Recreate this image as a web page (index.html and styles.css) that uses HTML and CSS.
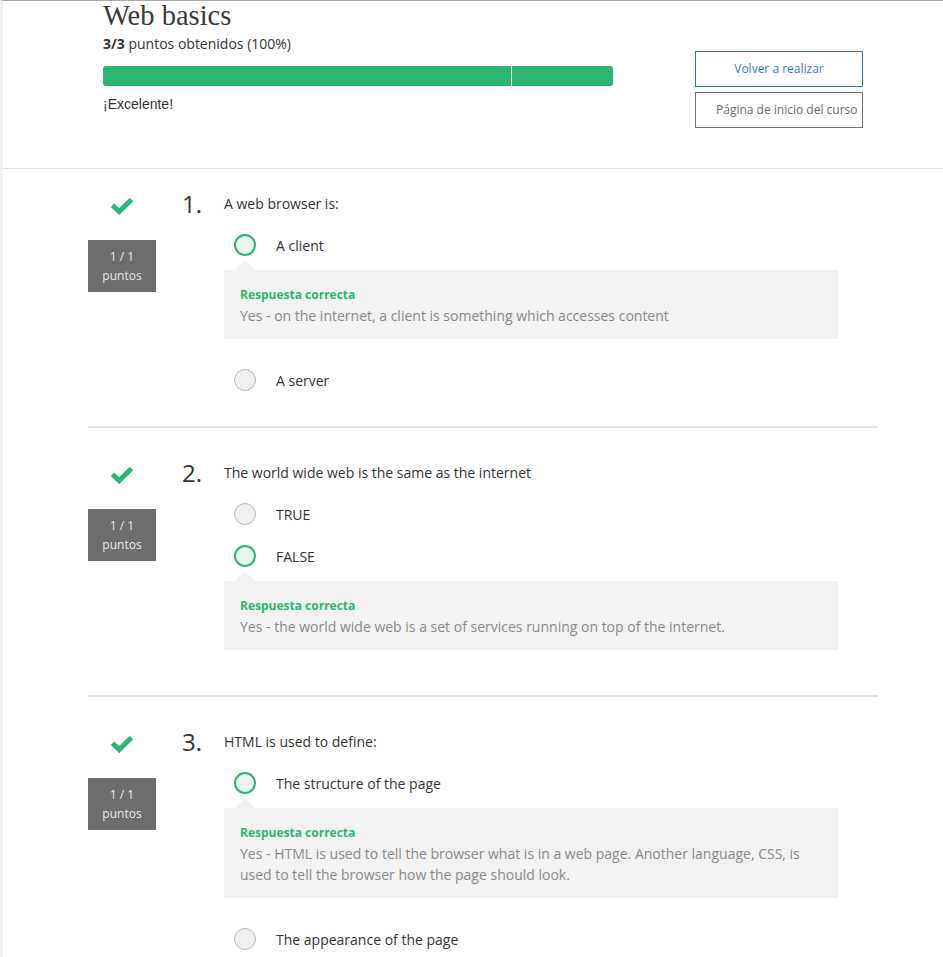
FILE: index.html
```html
<!DOCTYPE html>
<html lang="es">
<head>
<meta charset="utf-8">
<title>Web basics</title>
<link rel="stylesheet" href="styles.css">
</head>
<body>
<div class="page">
  <header class="summary">
    <div class="summary-main">
      <h1 class="title">Web basics</h1>
      <div class="score"><b>3/3</b> puntos obtenidos (100%)</div>
      <div class="progress">
        <div class="seg seg-first" style="width:408px"></div>
        <div class="seg seg-last" style="width:101px"></div>
      </div>
      <div class="verdict">¡Excelente!</div>
    </div>
    <div class="actions">
      <a class="btn btn-primary">Volver a realizar</a>
      <a class="btn btn-secondary">Página de inicio del curso</a>
    </div>
  </header>

  <main class="questions">
    <section class="question question-first">
      <div class="q-side">
        <div class="q-check"><svg width="24" height="18" viewBox="0 0 24 18"><polyline points="2.5,8.2 9.2,14.6 21.5,2.4" fill="none" stroke="#2bb673" stroke-width="5" stroke-linejoin="miter"/></svg></div>
        <div class="badge"><span>1 / 1</span><span>puntos</span></div>
      </div>
      <div class="q-num">1.</div>
      <div class="q-body">
        <div class="q-text">A web browser is:</div>
        <div class="option"><span class="radio radio-correct"></span><span class="option-label">A client</span></div>
        <div class="feedback">
          <div class="fb-title">Respuesta correcta</div>
          <div class="fb-text">Yes - on the internet, a client is something which accesses content</div>
        </div>
        <div class="option"><span class="radio"></span><span class="option-label">A server</span></div>
      </div>
    </section>

    <section class="question">
      <div class="q-side">
        <div class="q-check"><svg width="24" height="18" viewBox="0 0 24 18"><polyline points="2.5,8.2 9.2,14.6 21.5,2.4" fill="none" stroke="#2bb673" stroke-width="5" stroke-linejoin="miter"/></svg></div>
        <div class="badge"><span>1 / 1</span><span>puntos</span></div>
      </div>
      <div class="q-num">2.</div>
      <div class="q-body">
        <div class="q-text">The world wide web is the same as the internet</div>
        <div class="option"><span class="radio"></span><span class="option-label">TRUE</span></div>
        <div class="option"><span class="radio radio-correct"></span><span class="option-label">FALSE</span></div>
        <div class="feedback">
          <div class="fb-title">Respuesta correcta</div>
          <div class="fb-text">Yes - the world wide web is a set of services running on top of the internet.</div>
        </div>
      </div>
    </section>

    <section class="question">
      <div class="q-side">
        <div class="q-check"><svg width="24" height="18" viewBox="0 0 24 18"><polyline points="2.5,8.2 9.2,14.6 21.5,2.4" fill="none" stroke="#2bb673" stroke-width="5" stroke-linejoin="miter"/></svg></div>
        <div class="badge"><span>1 / 1</span><span>puntos</span></div>
      </div>
      <div class="q-num">3.</div>
      <div class="q-body">
        <div class="q-text">HTML is used to define:</div>
        <div class="option"><span class="radio radio-correct"></span><span class="option-label">The structure of the page</span></div>
        <div class="feedback">
          <div class="fb-title">Respuesta correcta</div>
          <div class="fb-text">Yes - HTML is used to tell the browser what is in a web page. Another language, CSS, is used to tell the browser how the page should look.</div>
        </div>
        <div class="option"><span class="radio"></span><span class="option-label">The appearance of the page</span></div>
      </div>
    </section>
  </main>
</div>
</body>
</html>
```
FILE: styles.css
```css
* { box-sizing: border-box; }

html, body {
  margin: 0;
  padding: 0;
  background: #ffffff;
}

body {
  font-family: "Open Sans", "Noto Sans", sans-serif;
  color: #333333;
}

.page {
  border-top: 1px solid #a9a9a9;
  border-left: 3px solid #f3f3f3;
  min-height: 100vh;
  overflow: hidden;
}

/* ---------- summary header ---------- */
.summary {
  display: flex;
  height: 168px;
  padding-left: 100px;
  border-bottom: 1px solid #e2e2e2;
}

.summary-main {
  width: 510px;
}

.title {
  margin: 0;
  font-family: "Liberation Serif", "Times New Roman", serif;
  font-weight: normal;
  font-size: 28.5px;
  line-height: 30px;
  color: #3a3a3a;
}

.score {
  margin-top: 4px;
  font-size: 14px;
  line-height: 18px;
  color: #333333;
}

.score b {
  font-weight: 700;
}

.progress {
  margin-top: 13px;
  height: 20px;
  display: flex;
  gap: 1px;
  background: #ffffff;
}

.seg {
  height: 20px;
  background: #2bb673;
  box-shadow: inset 0 -1px 0 rgba(0, 0, 0, 0.08);
}

.seg-first { border-radius: 3px 0 0 3px; }
.seg-last { border-radius: 0 3px 3px 0; }

.verdict {
  margin-top: 9px;
  font-family: "Liberation Sans", Arial, sans-serif;
  font-size: 14px;
  line-height: 18px;
  color: #333333;
}

.actions {
  margin-left: 82px;
  padding-top: 50px;
  display: flex;
  flex-direction: column;
  gap: 5px;
}

.btn {
  display: block;
  width: 168px;
  height: 36px;
  border: 1px solid #2a73cc;
  font-size: 12px;
  line-height: 34px;
  text-align: center;
  white-space: nowrap;
  cursor: pointer;
}

.btn-primary {
  color: #3a79c9;
  border-color: #2a73cc;
}

.btn-secondary {
  color: #6c6c72;
  border-color: #77727f;
  text-align: left;
  padding-left: 20px;
}

/* ---------- questions ---------- */
.questions {
  margin-left: 85px;
  width: 790px;
}

.question {
  display: flex;
  padding: 30px 0 25px;
  border-bottom: 2px solid #e3e3e3;
}

.question-first {
  padding-top: 20px;
}

.q-side {
  width: 68px;
  margin-right: 26px;
  display: flex;
  flex-direction: column;
  align-items: center;
}

.q-check {
  height: 30px;
  padding-top: 3px;
  display: flex;
  align-items: center;
}

.q-check svg { display: block; }

.badge {
  margin-top: 21px;
  width: 68px;
  height: 52px;
  background: #6e6e6e;
  color: #e6e6e6;
  font-size: 12px;
  line-height: 19px;
  display: flex;
  flex-direction: column;
  align-items: center;
  justify-content: center;
}

.q-num {
  width: 42px;
  font-size: 24px;
  font-weight: 400;
  line-height: 30px;
  color: #333333;
}

.q-body {
  width: 614px;
}

.q-text {
  font-size: 14px;
  line-height: 30px;
  color: #333333;
  margin-bottom: 5px;
}

.option {
  display: flex;
  align-items: center;
  height: 42px;
  padding-left: 10px;
}

.radio {
  flex: none;
  width: 22px;
  height: 22px;
  border-radius: 50%;
  border: 1px solid #b8b8b8;
  background: #efefef;
  margin-right: 20px;
}

.radio-correct {
  border: 2px solid #2bb673;
  background: #eaf3ec;
}

.option-label {
  font-size: 14px;
  color: #333333;
}

.feedback {
  position: relative;
  margin: 4px 0 20px;
  background: #f2f2f2;
  padding: 14px 16px 13px;
}

.feedback::before {
  content: "";
  position: absolute;
  top: -10px;
  left: 11px;
  border-left: 10px solid transparent;
  border-right: 10px solid transparent;
  border-bottom: 10px solid #f2f2f2;
}

.fb-title {
  font-size: 12px;
  font-weight: 700;
  line-height: 21px;
  color: #2bb673;
}

.fb-text {
  font-size: 14px;
  line-height: 21px;
  color: #8a8a8a;
}
```
